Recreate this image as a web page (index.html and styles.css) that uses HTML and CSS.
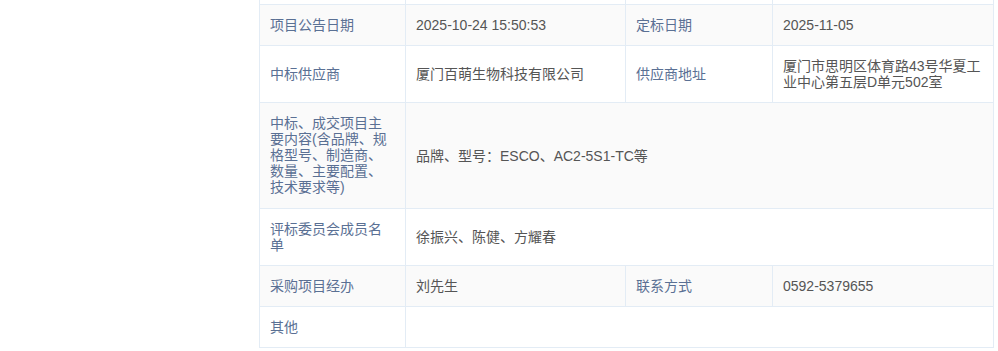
FILE: index.html
```html
<!DOCTYPE html>
<html lang="zh-CN">
<head>
<meta charset="utf-8">
<title>中标结果公告</title>
<link rel="stylesheet" href="styles.css">
</head>
<body>
<div class="page">
  <aside class="side"></aside>
  <main class="main">
    <table class="info">
      <colgroup>
        <col class="c-label">
        <col class="c-value">
        <col class="c-label2">
        <col class="c-value2">
      </colgroup>
      <tbody>
        <tr class="prev">
          <th></th><td></td><th></th><td></td>
        </tr>
        <tr>
          <th>项目公告日期</th>
          <td>2025-10-24 15:50:53</td>
          <th>定标日期</th>
          <td>2025-11-05</td>
        </tr>
        <tr>
          <th>中标供应商</th>
          <td>厦门百萌生物科技有限公司</td>
          <th>供应商地址</th>
          <td>厦门市思明区体育路43号华夏工业中心第五层D单元502室</td>
        </tr>
        <tr class="tall">
          <th>中标、成交项目主要内容(含品牌、规格型号、制造商、数量、主要配置、技术要求等)</th>
          <td colspan="3">品牌、型号：ESCO、AC2-5S1-TC等</td>
        </tr>
        <tr>
          <th>评标委员会成员名单</th>
          <td colspan="3">徐振兴、陈健、方耀春</td>
        </tr>
        <tr>
          <th>采购项目经办</th>
          <td>刘先生</td>
          <th>联系方式</th>
          <td>0592-5379655</td>
        </tr>
        <tr>
          <th>其他</th>
          <td colspan="3"></td>
        </tr>
      </tbody>
    </table>
  </main>
</div>
</body>
</html>
```
FILE: styles.css
```css
html, body {
  margin: 0;
  padding: 0;
  background: #ffffff;
}

body {
  font-family: "Liberation Sans", "Noto Sans CJK SC", sans-serif;
  font-size: 14px;
  color: #555555;
}

.page {
  display: grid;
  grid-template-columns: 259px 734px;
  overflow: hidden;
  height: 351px;
}

.main {
  margin-top: -37px;
}

.info {
  width: 734px;
  table-layout: fixed;
  border-collapse: collapse;
}

.c-label { width: 146px; }
.c-value { width: 220px; }
.c-label2 { width: 147px; }
.c-value2 { width: 221px; }

.info th,
.info td {
  border: 1px solid #e3ecf5;
  padding: 12px 8px 12px 10px;
  line-height: 16px;
  vertical-align: middle;
  text-align: left;
}

.info th {
  font-weight: normal;
  color: #5a7094;
  padding-right: 12px;
}

.info td {
  color: #555555;
}

/* multi-line label row gets a touch more room below */
.info tr.tall th {
  padding-bottom: 13px;
}

.info tr.prev th,
.info tr.prev td {
  height: 16px;
}

.info tbody tr:nth-child(even) {
  background: #fafafa;
}

.info tbody tr:nth-child(odd) {
  background: #ffffff;
}
```
